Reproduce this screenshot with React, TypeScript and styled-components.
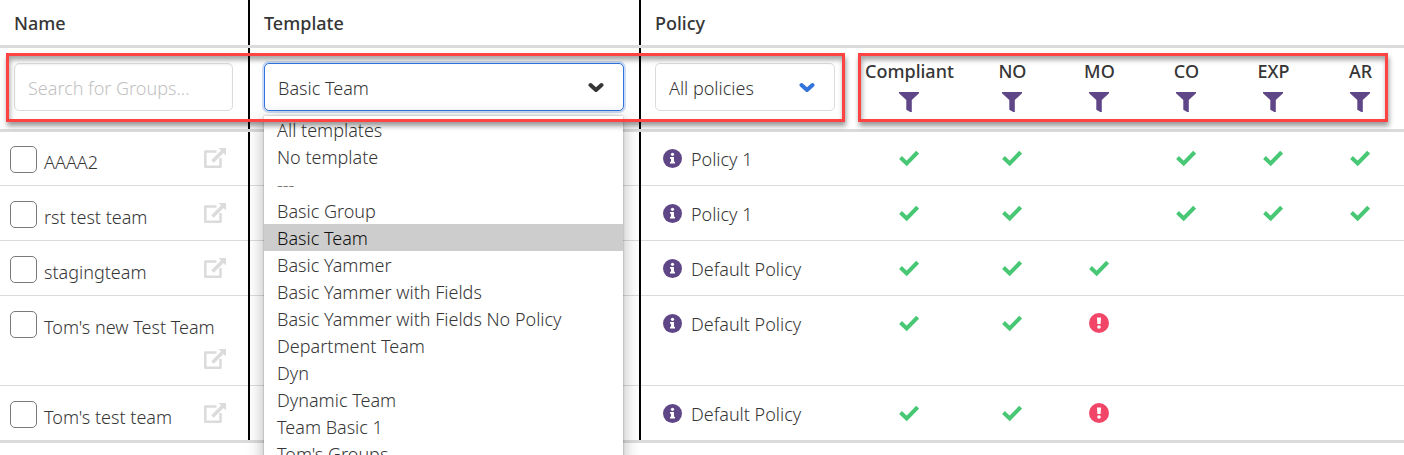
import React from 'react';
import styled, { createGlobalStyle, css } from 'styled-components';

const GlobalStyle = createGlobalStyle`
  *, *::before, *::after { box-sizing: border-box; }
  body {
    margin: 0;
    background: #fff;
    color: #363636;
    font-family: 'Noto Sans', 'Open Sans', sans-serif;
    font-size: 18px;
    font-weight: 300;
    line-height: 27px;
    overflow: hidden;
  }
`;

const GRID = '#dbdbdb';
const PURPLE = '#5f4687';

const Page = styled.main`
  position: relative;
  width: 100%;
  min-height: 100vh;
`;

const Table = styled.table`
  width: 100%;
  table-layout: fixed;
  border-collapse: separate;
  border-spacing: 0;
`;

const Col = styled.col<{ $w?: number }>`
  ${p => p.$w && css`width: ${p.$w}px;`}
`;

type CellProps = { $divider?: boolean; $center?: boolean };

const cell = css<CellProps>`
  text-align: ${p => (p.$center ? 'center' : 'left')};
  vertical-align: top;
`;

const headLines = css<CellProps>`
  box-shadow: inset 0 -3px ${GRID}${p => (p.$divider ? ', inset -2px 0 #000' : '')};
`;

const HeadCell = styled.th<CellProps>`
  ${cell}
  ${headLines}
  height: 48px;
  padding: 10px 14px 11px;
  font-weight: 500;
`;

const FilterCell = styled.th<CellProps>`
  ${cell}
  ${headLines}
  height: 84px;
  padding: ${p => (p.$center ? '10px 0 0' : p.$divider ? '15px 17px 0 14px' : '15px 15px 0 14px')};
  font-weight: ${p => (p.$center ? 500 : 300)};
`;

const BodyCell = styled.td<CellProps>`
  ${cell}
  height: 55px;
  padding: ${p => (p.$center ? '18px 0 0' : '16px 24px 2px 10px')};
  box-shadow: ${p => (p.$divider ? 'inset -2px 0 #000, ' : '')}inset 0 1px ${GRID};

  tr:first-child > & {
    height: 53px;
    padding-top: ${p => (p.$center ? 16 : 14)}px;
    box-shadow: ${p => (p.$divider ? 'inset -2px 0 #000' : 'none')};
  }

  tr:last-child > & {
    height: 58px;
    box-shadow: inset 0 -3px ${GRID}, ${p => (p.$divider ? 'inset -2px 0 #000, ' : '')}inset 0 1px ${GRID};
  }
`;

const control = css`
  display: block;
  width: 100%;
  height: 48px;
  border: 1px solid ${GRID};
  border-radius: 5px;
  padding: 2px 13px 0;
  background: #fff;
  color: #363636;
  font: inherit;
  outline: none;
`;

const SearchInput = styled.input`
  ${control}
  box-shadow: inset 0 1px 2px rgba(10, 10, 10, 0.05);
  &::placeholder { color: #c2c2c2; opacity: 1; }
`;

const SelectWrap = styled.div<{ $color: string }>`
  position: relative;
  color: ${p => p.$color};
  svg {
    position: absolute;
    top: 19px;
    right: 20px;
    pointer-events: none;
  }
`;

const Select = styled.select<{ $active?: boolean }>`
  ${control}
  appearance: none;
  ${p => p.$active && css`
    border-color: #3273dc;
    box-shadow: 0 0 0 2px rgba(50, 115, 220, 0.25);
  `}
`;

const Menu = styled.ul`
  position: absolute;
  z-index: 2;
  top: 53px;
  left: 0;
  right: 1px;
  margin: 0;
  padding: 0;
  list-style: none;
  background: #fff;
  box-shadow: 0 4px 16px rgba(0, 0, 0, 0.3), 0 0 2px rgba(0, 0, 0, 0.3);
  color: #363636;
`;

const MenuItem = styled.li<{ $selected?: boolean; $muted?: boolean }>`
  height: 27px;
  padding: 1px 13px 0;
  background: ${p => (p.$selected ? '#cdcdcd' : 'transparent')};
  color: ${p => (p.$selected ? '#101010' : p.$muted ? '#777' : '#363636')};
`;

const FilterButton = styled.button`
  display: block;
  margin: 7px auto 0;
  padding: 0;
  border: 0;
  background: none;
  color: ${PURPLE};
  svg { display: block; }
`;

const NameRow = styled.div`
  display: flex;
  flex-wrap: wrap;
`;

const Check = styled.label`
  display: flex;
  gap: 7px;
  height: 36px;
  line-height: 33px;
  white-space: nowrap;
`;

const Checkbox = styled.input`
  appearance: none;
  flex: none;
  width: 27px;
  height: 27px;
  margin: 0;
  border: 1px solid #7a7a7a;
  border-radius: 5px;
  background: #fff;
`;

const OpenLink = styled.a`
  display: block;
  height: 36px;
  margin-left: auto;
  padding-top: 2px;
  color: ${GRID};
  svg { display: block; }
`;

const PolicyRow = styled.div`
  display: flex;
  gap: 9px;
  padding-left: 12px;
  white-space: nowrap;
  svg { flex: none; margin-top: 3px; color: ${PURPLE}; }
`;

const Status = styled.span<{ $bad?: boolean }>`
  display: inline-block;
  color: ${p => (p.$bad ? '#f14668' : '#48c774')};
  svg { display: block; }
`;

const Callout = styled.div<{ $left: string; $right: string }>`
  position: absolute;
  z-index: 3;
  top: 53px;
  left: ${p => p.$left};
  right: ${p => p.$right};
  height: 69px;
  border: 3px solid #ff4242;
  box-shadow: 1px 4px 5px rgba(0, 0, 0, 0.4), inset 1px 4px 5px rgba(0, 0, 0, 0.35);
  pointer-events: none;
`;

const Chevron = () => (
  <svg width="16" height="11" viewBox="0 0 16 11" fill="none" stroke="currentColor" strokeWidth="4" strokeLinecap="round" strokeLinejoin="round" aria-hidden>
    <path d="M2.5 3 8 8l5.5-5" />
  </svg>
);

const Funnel = () => (
  <svg width="20" height="20" viewBox="0 0 20 20" fill="currentColor" aria-hidden>
    <path d="M0 0h20v1.300L12.800 8v12h-1.500L7.300 17.800V8L0 1.300z" />
  </svg>
);

const Tick = () => (
  <svg width="20" height="20" viewBox="0 0 20 20" fill="none" stroke="currentColor" strokeWidth="4" aria-hidden>
    <path d="M1.500 9.500 7.700 15.500 18.600 4.200" />
  </svg>
);

const Alert = () => (
  <svg width="20" height="20" viewBox="0 0 20 20" aria-hidden>
    <circle cx="10" cy="10" r="10" fill="currentColor" />
    <path d="M8 4.500h4l-.4 6.500H8.400z" fill="#fff" />
    <circle cx="10" cy="14" r="1.800" fill="#fff" />
  </svg>
);

const Info = () => (
  <svg width="19" height="19" viewBox="0 0 19 19" aria-hidden>
    <circle cx="9.500" cy="9.500" r="9.500" fill="currentColor" />
    <circle cx="9.500" cy="5.300" r="1.600" fill="#fff" />
    <path d="M7 8h4v4.800h1v1.700H7v-1.700h1V9.700H7z" fill="#fff" />
  </svg>
);

const External = () => (
  <svg width="22" height="20" viewBox="0 0 22 20" fill="none" stroke="currentColor" strokeWidth="2.500" strokeLinejoin="round" aria-hidden>
    <path d="M12.500 3.500H1.300v15.200h15.200V10" />
    <path d="M8.500 13.500 19 3" strokeWidth="3.500" />
    <path d="M14.500 0H22v7.500z" fill="currentColor" stroke="none" />
  </svg>
);

const templates = [
  'All templates', 'No template', '---', 'Basic Group', 'Basic Team', 'Basic Yammer',
  'Basic Yammer with Fields', 'Basic Yammer with Fields No Policy', 'Department Team',
  'Dyn', 'Dynamic Team', 'Team Basic 1', "Tom's Groups",
];

const flags = ['Compliant', 'NO', 'MO', 'CO', 'EXP', 'AR'];

type Mark = 'ok' | 'bad' | '';
const rows: { name: string; policy: string; marks: Mark[] }[] = [
  { name: 'AAAA2', policy: 'Policy 1', marks: ['ok', 'ok', '', 'ok', 'ok', 'ok'] },
  { name: 'rst test team', policy: 'Policy 1', marks: ['ok', 'ok', '', 'ok', 'ok', 'ok'] },
  { name: 'stagingteam', policy: 'Default Policy', marks: ['ok', 'ok', 'ok', '', '', ''] },
  { name: "Tom's new Test Team", policy: 'Default Policy', marks: ['ok', 'ok', 'bad', '', '', ''] },
  { name: "Tom's test team", policy: 'Default Policy', marks: ['ok', 'ok', 'bad', '', '', ''] },
];

export default function App() {
  return (
    <Page>
      <GlobalStyle />
      <Table>
        <colgroup>
          <Col $w={250} />
          <Col />
          <Col $w={209} />
          <Col $w={119} />
          {flags.slice(1).map(f => <Col key={f} $w={87} />)}
        </colgroup>
        <thead>
          <tr>
            <HeadCell $divider>Name</HeadCell>
            <HeadCell $divider>Template</HeadCell>
            <HeadCell>Policy</HeadCell>
            <HeadCell colSpan={6} />
          </tr>
          <tr>
            <FilterCell $divider>
              <SearchInput type="text" aria-label="Search for Groups" placeholder="Search for Groups..." />
            </FilterCell>
            <FilterCell $divider>
              <SelectWrap $color="#363636">
                <Select $active aria-label="Template" defaultValue="Basic Team">
                  {templates.map(t => <option key={t}>{t}</option>)}
                </Select>
                <Chevron />
                <Menu>
                  {templates.map(t => (
                    <MenuItem key={t} $selected={t === 'Basic Team'} $muted={t === '---'}>{t}</MenuItem>
                  ))}
                </Menu>
              </SelectWrap>
            </FilterCell>
            <FilterCell>
              <SelectWrap $color="#3273dc">
                <Select aria-label="Policy"><option>All policies</option></Select>
                <Chevron />
              </SelectWrap>
            </FilterCell>
            {flags.map(f => (
              <FilterCell key={f} $center>
                {f}
                <FilterButton type="button" aria-label={`Filter ${f}`}><Funnel /></FilterButton>
              </FilterCell>
            ))}
          </tr>
        </thead>
        <tbody>
          {rows.map(r => (
            <tr key={r.name}>
              <BodyCell $divider>
                <NameRow>
                  <Check><Checkbox type="checkbox" />{r.name}</Check>
                  <OpenLink href="#" aria-label={`Open ${r.name}`}><External /></OpenLink>
                </NameRow>
              </BodyCell>
              <BodyCell $divider />
              <BodyCell>
                <PolicyRow><Info />{r.policy}</PolicyRow>
              </BodyCell>
              {r.marks.map((m, j) => (
                <BodyCell key={flags[j]} $center>
                  {m && <Status $bad={m === 'bad'}>{m === 'ok' ? <Tick /> : <Alert />}</Status>}
                </BodyCell>
              ))}
            </tr>
          ))}
        </tbody>
      </Table>
      <Callout $left="6px" $right="559px" />
      <Callout $left="858px" $right="16px" />
    </Page>
  );
}
